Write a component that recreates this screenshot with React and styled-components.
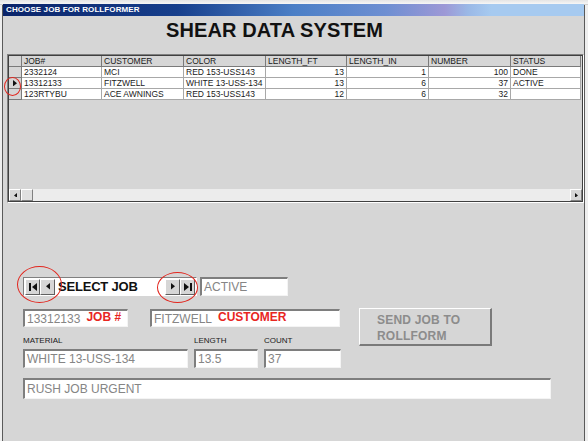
import React from "react";
import styled, { createGlobalStyle } from "styled-components";

const Global = createGlobalStyle`
  html, body { margin: 0; padding: 0; background: #f2f2f2; }
  body { font-family: "Liberation Sans", Arial, sans-serif; }
  * { box-sizing: border-box; }
`;

const Page = styled.div`
  position: relative;
  width: 588px;
  height: 441px;
  overflow: hidden;
  background: #eeeeee;
`;

const TopStrip = styled.div`
  height: 5px;
  background: linear-gradient(to bottom, #e4e4e4, #f6f6f6);
  border-bottom: 1px solid #cfcfcf;
`;

const Window = styled.div`
  margin-left: 2px;
  width: 583px;
  height: 436px;
  background: #d6d6d6;
  border-left: 1px solid #5a5a5a;
  border-right: 1px solid #5a5a5a;
  display: flex;
  flex-direction: column;
`;

const TitleBar = styled.div`
  height: 12px;
  margin-top: -1px;
  padding-left: 3px;
  line-height: 12px;
  font-size: 8px;
  font-weight: bold;
  color: #ffffff;
  letter-spacing: 0.1px;
  background: linear-gradient(
    to right,
    #0a246a 0%,
    #173f8c 30%,
    #4b7fc6 50%,
    #6e8fd2 66%,
    #9d98d6 76%,
    #9ab8e6 80%,
    #a6caf0 84%,
    #a6caf0 100%
  );
`;

const Heading = styled.h1`
  margin: 0;
  height: 28px;
  padding-right: 38px;
  line-height: 28px;
  text-align: center;
  font-size: 20px;
  font-weight: bold;
  color: #111;
  letter-spacing: 0.1px;
`;

const Grid = styled.div`
  margin: 10px 0 0 4px;
  width: 577px;
  height: 149px;
  display: flex;
  flex-direction: column;
  background: #d6d6d6;
  border-top: 1px solid #808080;
  border-left: 1px solid #808080;
  border-right: 1px solid #ffffff;
  border-bottom: 1px solid #ffffff;
  box-shadow: inset 1px 1px 0 #404040, inset -1px -1px 0 #404040;
  padding: 1px;
`;

const Table = styled.div`
  display: grid;
  grid-template-columns: 13px 80px 82px 82px 81px 82px 82px 70px;
  grid-auto-rows: 11px;
`;

const Cell = styled.div`
  font-size: 8.5px;
  line-height: 10px;
  padding: 0 2px;
  color: #1a1a1a;
  white-space: nowrap;
  overflow: hidden;
  text-align: ${(p) => (p.$right ? "right" : "left")};
  background: ${(p) => (p.$head ? "#d6d6d6" : "#ffffff")};
  border-right: 1px solid ${(p) => (p.$head ? "#7a7a7a" : "#a8a8a8")};
  border-bottom: 1px solid ${(p) => (p.$head ? "#7a7a7a" : "#a8a8a8")};
`;

const SelCell = styled.div`
  background: #d6d6d6;
  border-right: 1px solid #7a7a7a;
  border-bottom: 1px solid #7a7a7a;
  display: flex;
  align-items: center;
  justify-content: center;
`;

const GridFill = styled.div`
  flex: 1;
`;

const HScroll = styled.div`
  height: 12px;
  display: flex;
  background: #ececec;
`;

const ScrollBtn = styled.div`
  width: 12px;
  height: 12px;
  background: #d6d6d6;
  border-top: 1px solid #ffffff;
  border-left: 1px solid #ffffff;
  border-right: 1px solid #808080;
  border-bottom: 1px solid #808080;
  display: flex;
  align-items: center;
  justify-content: center;
`;

const Thumb = styled(ScrollBtn)`
  width: 12px;
  background: #e0e0e0;
`;

const ScrollTrack = styled.div`
  flex: 1;
`;

const Form = styled.div`
  padding-left: 20px;
  margin-top: 74px;
  display: flex;
  flex-direction: column;
`;

const NavRow = styled.div`
  display: flex;
  gap: 3px;
  height: 19px;
`;

const Navigator = styled.div`
  width: 174px;
  height: 19px;
  display: flex;
  align-items: center;
  background: #ffffff;
  border-top: 1px solid #808080;
  border-left: 1px solid #808080;
  border-right: 1px solid #ffffff;
  border-bottom: 1px solid #ffffff;
  padding: 1px;
`;

const NavBtn = styled.div`
  width: 15px;
  height: 16px;
  background: #d6d6d6;
  border-top: 1px solid #ffffff;
  border-left: 1px solid #ffffff;
  border-right: 1px solid #606060;
  border-bottom: 1px solid #606060;
  display: flex;
  align-items: center;
  justify-content: center;
`;

const NavLabel = styled.div`
  flex: 1;
  padding-left: 3px;
  font-size: 13px;
  font-weight: bold;
  color: #111;
  letter-spacing: -0.2px;
  line-height: 16px;
`;

const Field = styled.div`
  width: ${(p) => p.$w}px;
  height: ${(p) => p.$h || 19}px;
  background: #ffffff;
  border-top: 2px solid #7e7e7e;
  border-left: 2px solid #7e7e7e;
  border-right: 1px solid #f4f4f4;
  border-bottom: 1px solid #f4f4f4;
  display: flex;
  align-items: center;
  padding-left: 2px;
  gap: 6px;
  font-size: 12px;
  color: #858585;
  white-space: nowrap;
  overflow: hidden;
`;

const RedTag = styled.span`
  color: #e8261f;
  font-weight: bold;
  font-size: 12px;
  margin-top: -3px;
`;

const Middle = styled.div`
  display: flex;
  gap: 18px;
  margin-top: 13px;
`;

const LeftCol = styled.div`
  display: flex;
  flex-direction: column;
`;

const FieldRow = styled.div`
  display: flex;
  gap: ${(p) => p.$gap || 6}px;
`;

const LabelRow = styled.div`
  display: flex;
  height: 22px;
  align-items: flex-end;
  padding-bottom: 3px;
`;

const Label = styled.div`
  width: ${(p) => p.$w}px;
  font-size: 8px;
  line-height: 10px;
  color: #1a1a1a;
`;

const SendButton = styled.div`
  width: 133px;
  height: 38px;
  margin-top: -1px;
  background: #d6d6d6;
  border-top: 1px solid #ffffff;
  border-left: 1px solid #ffffff;
  border-right: 2px solid #7a7a7a;
  border-bottom: 2px solid #7a7a7a;
  padding: 3px 0 0 17px;
  font-size: 12px;
  font-weight: bold;
  line-height: 16px;
  color: #8c8c8c;
  letter-spacing: 0.2px;
`;

const Notes = styled(Field)`
  margin-top: 10px;
`;

const RedRing = styled.div`
  position: absolute;
  left: ${(p) => p.$x}px;
  top: ${(p) => p.$y}px;
  width: ${(p) => p.$w}px;
  height: ${(p) => p.$h}px;
  border: 1.5px solid #e2261e;
  border-radius: 50%;
  pointer-events: none;
`;

const Tri = ({ dir = "right", size = 5, color = "#111" }) => (
  <svg width={size} height={size * 1.6} viewBox="0 0 5 8">
    {dir === "right" ? (
      <polygon points="0,0 5,4 0,8" fill={color} />
    ) : (
      <polygon points="5,0 0,4 5,8" fill={color} />
    )}
  </svg>
);

const EndIcon = ({ dir }) => (
  <svg width="8" height="8" viewBox="0 0 8 8">
    {dir === "left" ? (
      <>
        <rect x="0" y="0" width="2" height="8" fill="#111" />
        <polygon points="8,0 3,4 8,8" fill="#111" />
      </>
    ) : (
      <>
        <polygon points="0,0 5,4 0,8" fill="#111" />
        <rect x="6" y="0" width="2" height="8" fill="#111" />
      </>
    )}
  </svg>
);

const columns = [
  { key: "job", label: "JOB#" },
  { key: "customer", label: "CUSTOMER" },
  { key: "color", label: "COLOR" },
  { key: "ft", label: "LENGTH_FT", right: true },
  { key: "inch", label: "LENGTH_IN", right: true },
  { key: "number", label: "NUMBER", right: true },
  { key: "status", label: "STATUS" },
];

const rows = [
  { job: "2332124", customer: "MCI", color: "RED  153-USS143", ft: "13", inch: "1", number: "100", status: "DONE" },
  { job: "13312133", customer: "FITZWELL", color: "WHITE 13-USS-134", ft: "13", inch: "6", number: "37", status: "ACTIVE", current: true },
  { job: "123RTYBU", customer: "ACE AWNINGS", color: "RED  153-USS143", ft: "12", inch: "6", number: "32", status: "" },
];

export default function App() {
  return (
    <>
      <Global />
      <Page>
        <TopStrip />
        <Window>
          <TitleBar>CHOOSE JOB FOR ROLLFORMER</TitleBar>
          <Heading>SHEAR DATA SYSTEM</Heading>
          <Grid>
            <Table>
              <SelCell />
              {columns.map((c) => (
                <Cell key={c.key} $head>
                  {c.label}
                </Cell>
              ))}
              {rows.map((r, i) => (
                <React.Fragment key={i}>
                  <SelCell>{r.current && <Tri size={4} />}</SelCell>
                  {columns.map((c) => (
                    <Cell key={c.key} $right={c.right}>
                      {r[c.key]}
                    </Cell>
                  ))}
                </React.Fragment>
              ))}
            </Table>
            <GridFill />
            <HScroll>
              <ScrollBtn>
                <Tri dir="left" size={3} />
              </ScrollBtn>
              <Thumb />
              <ScrollTrack />
              <ScrollBtn>
                <Tri dir="right" size={3} />
              </ScrollBtn>
            </HScroll>
          </Grid>

          <Form>
            <NavRow>
              <Navigator>
                <NavBtn>
                  <EndIcon dir="left" />
                </NavBtn>
                <NavBtn>
                  <Tri dir="left" size={4} />
                </NavBtn>
                <NavLabel>SELECT JOB</NavLabel>
                <NavBtn>
                  <Tri dir="right" size={4} />
                </NavBtn>
                <NavBtn>
                  <EndIcon dir="right" />
                </NavBtn>
              </Navigator>
              <Field $w={88}>ACTIVE</Field>
            </NavRow>

            <Middle>
              <LeftCol>
                <FieldRow $gap={22}>
                  <Field $w={105} $h={18}>
                    13312133 <RedTag>JOB #</RedTag>
                  </Field>
                  <Field $w={190} $h={18}>
                    FITZWELL <RedTag>CUSTOMER</RedTag>
                  </Field>
                </FieldRow>
                <LabelRow>
                  <Label $w={171}>MATERIAL</Label>
                  <Label $w={70}>LENGTH</Label>
                  <Label $w={60}>COUNT</Label>
                </LabelRow>
                <FieldRow>
                  <Field $w={165}>WHITE 13-USS-134</Field>
                  <Field $w={64}>13.5</Field>
                  <Field $w={77}>37</Field>
                </FieldRow>
              </LeftCol>
              <SendButton>
                SEND JOB TO
                <br />
                ROLLFORM
              </SendButton>
            </Middle>

            <Notes $w={528} $h={21}>RUSH JOB URGENT</Notes>
          </Form>
        </Window>

        <RedRing $x={4} $y={77} $w={17} $h={19} />
        <RedRing $x={17} $y={266} $w={45} $h={37} />
        <RedRing $x={157} $y={272} $w={41} $h={31} />
      </Page>
    </>
  );
}
